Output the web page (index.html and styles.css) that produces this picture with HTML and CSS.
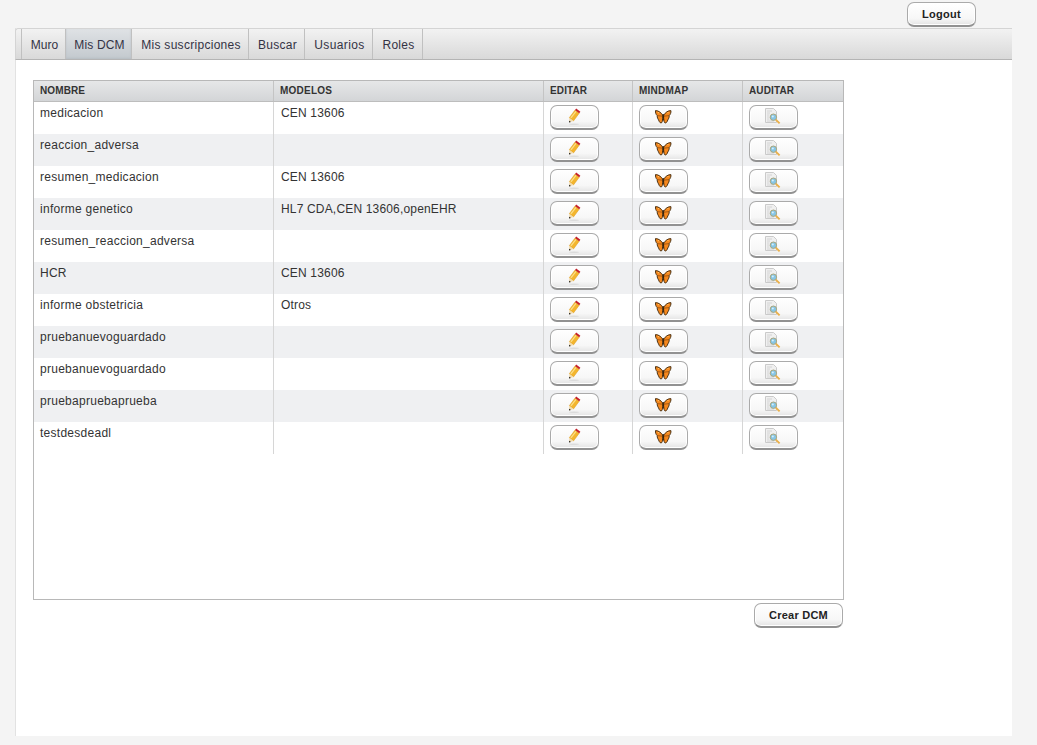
FILE: index.html
```html
<!DOCTYPE html>
<html lang="es">
<head>
<meta charset="utf-8">
<title>Mis DCM</title>
<link rel="stylesheet" href="styles.css">
</head>
<body>
<svg class="defs" width="0" height="0" aria-hidden="true">
  <symbol id="i-pencil" viewBox="0 0 18 18">
    <ellipse cx="8" cy="16.2" rx="5" ry=".8" fill="#dcdcdc"/>
    <g transform="translate(0 .5)">
      <path d="M3.3 9.2 9 1.6 13.2 4.8 7.5 12.4Z" fill="#f3b52e" stroke="#dc9a1c" stroke-width=".5"/>
      <path d="M4.9 9.4 10 2.8" stroke="#fbe08a" stroke-width="1.2"/>
      <path d="M9 1.6 10.2 0 14.4 3.2 13.2 4.8Z" fill="#c4202a"/>
      <path d="M3.3 9.2 7.5 12.4 3 14Z" fill="#f3dcae"/>
      <path d="M3 14 3.1 12.2 5 13.4Z" fill="#222"/>
    </g>
  </symbol>
  <symbol id="i-fly" viewBox="0 0 18 18">
    <path d="M7.6 7C6 4.5 3.5 2.6.5 2.6.2 4.5 1 6.6 2.2 7.6 2 9.5 3 11 3.6 12 4.4 14.5 5.8 15.6 6.8 14.6 7.6 13.5 7.6 11 7.8 9Z" fill="#f5871c" stroke="#3a2408" stroke-width=".9"/>
    <path d="M8.8 7C10.4 4.5 12.9 2.6 15.9 2.6 16.2 4.5 15.4 6.6 14.2 7.6 14.4 9.5 13.4 11 12.8 12 12 14.5 10.6 15.6 9.6 14.6 8.8 13.5 8.8 11 8.6 9Z" fill="#f5871c" stroke="#3a2408" stroke-width=".9"/>
    <path d="M2.4 7.6 7.4 8.2M14 7.6 9 8.2" stroke="#8a4a10" stroke-width=".7"/>
    <path d="M8.2 6V12.5" stroke="#2a1a06" stroke-width="1.1"/>
    <circle cx="3.4" cy="4.6" r=".7" fill="#ffc670"/>
    <circle cx="13" cy="4.6" r=".7" fill="#ffc670"/>
  </symbol>
  <symbol id="i-audit" viewBox="0 0 18 18">
    <path d="M.5 .5H8.5L11.5 3.5V14.5H.5Z" fill="#f0f0f0" stroke="#cacaca"/>
    <path d="M2 3H7M2 5H5M2 7H4.5M2 9H4.5M2 11H4.5M2 13H9" stroke="#cbcbcb" stroke-width=".8"/>
    <circle cx="8.4" cy="9.2" r="3.2" fill="#86c6e6" stroke="#aaa67c" stroke-width="1"/>
    <circle cx="7.8" cy="8.6" r="1" fill="#d8f0fb"/>
    <path d="M10.8 11.6 14.6 15.4" stroke="#eab04a" stroke-width="1.9"/>
  </symbol>
</svg>

<div class="topbar"><button class="btn btn-text">Logout</button></div>

<main class="panel">
  <nav class="tabs">
    <a class="tab tab-muro">Muro</a>
    <a class="tab tab-active tab-dcm">Mis DCM</a>
    <a class="tab tab-sus">Mis suscripciones</a>
    <a class="tab tab-buscar">Buscar</a>
    <a class="tab tab-usuarios">Usuarios</a>
    <a class="tab tab-roles">Roles</a>
  </nav>
  <section class="content">
    <div class="grid">
      <div class="row head">
        <div class="cell c-name">NOMBRE</div><div class="cell c-model">MODELOS</div><div class="cell c-edit">EDITAR</div><div class="cell c-mind">MINDMAP</div><div class="cell c-audit">AUDITAR</div>
      </div>
      <div class="row"><div class="cell c-name">medicacion</div><div class="cell c-model">CEN 13606</div><div class="cell c-edit"><button class="btn btn-icon"><svg class="ico"><use href="#i-pencil"/></svg></button></div><div class="cell c-mind"><button class="btn btn-icon"><svg class="ico"><use href="#i-fly"/></svg></button></div><div class="cell c-audit"><button class="btn btn-icon"><svg class="ico"><use href="#i-audit"/></svg></button></div></div>
      <div class="row alt"><div class="cell c-name">reaccion_adversa</div><div class="cell c-model"></div><div class="cell c-edit"><button class="btn btn-icon"><svg class="ico"><use href="#i-pencil"/></svg></button></div><div class="cell c-mind"><button class="btn btn-icon"><svg class="ico"><use href="#i-fly"/></svg></button></div><div class="cell c-audit"><button class="btn btn-icon"><svg class="ico"><use href="#i-audit"/></svg></button></div></div>
      <div class="row"><div class="cell c-name">resumen_medicacion</div><div class="cell c-model">CEN 13606</div><div class="cell c-edit"><button class="btn btn-icon"><svg class="ico"><use href="#i-pencil"/></svg></button></div><div class="cell c-mind"><button class="btn btn-icon"><svg class="ico"><use href="#i-fly"/></svg></button></div><div class="cell c-audit"><button class="btn btn-icon"><svg class="ico"><use href="#i-audit"/></svg></button></div></div>
      <div class="row alt"><div class="cell c-name">informe genetico</div><div class="cell c-model">HL7 CDA,CEN 13606,openEHR</div><div class="cell c-edit"><button class="btn btn-icon"><svg class="ico"><use href="#i-pencil"/></svg></button></div><div class="cell c-mind"><button class="btn btn-icon"><svg class="ico"><use href="#i-fly"/></svg></button></div><div class="cell c-audit"><button class="btn btn-icon"><svg class="ico"><use href="#i-audit"/></svg></button></div></div>
      <div class="row"><div class="cell c-name">resumen_reaccion_adversa</div><div class="cell c-model"></div><div class="cell c-edit"><button class="btn btn-icon"><svg class="ico"><use href="#i-pencil"/></svg></button></div><div class="cell c-mind"><button class="btn btn-icon"><svg class="ico"><use href="#i-fly"/></svg></button></div><div class="cell c-audit"><button class="btn btn-icon"><svg class="ico"><use href="#i-audit"/></svg></button></div></div>
      <div class="row alt"><div class="cell c-name">HCR</div><div class="cell c-model">CEN 13606</div><div class="cell c-edit"><button class="btn btn-icon"><svg class="ico"><use href="#i-pencil"/></svg></button></div><div class="cell c-mind"><button class="btn btn-icon"><svg class="ico"><use href="#i-fly"/></svg></button></div><div class="cell c-audit"><button class="btn btn-icon"><svg class="ico"><use href="#i-audit"/></svg></button></div></div>
      <div class="row"><div class="cell c-name">informe obstetricia</div><div class="cell c-model">Otros</div><div class="cell c-edit"><button class="btn btn-icon"><svg class="ico"><use href="#i-pencil"/></svg></button></div><div class="cell c-mind"><button class="btn btn-icon"><svg class="ico"><use href="#i-fly"/></svg></button></div><div class="cell c-audit"><button class="btn btn-icon"><svg class="ico"><use href="#i-audit"/></svg></button></div></div>
      <div class="row alt"><div class="cell c-name">pruebanuevoguardado</div><div class="cell c-model"></div><div class="cell c-edit"><button class="btn btn-icon"><svg class="ico"><use href="#i-pencil"/></svg></button></div><div class="cell c-mind"><button class="btn btn-icon"><svg class="ico"><use href="#i-fly"/></svg></button></div><div class="cell c-audit"><button class="btn btn-icon"><svg class="ico"><use href="#i-audit"/></svg></button></div></div>
      <div class="row"><div class="cell c-name">pruebanuevoguardado</div><div class="cell c-model"></div><div class="cell c-edit"><button class="btn btn-icon"><svg class="ico"><use href="#i-pencil"/></svg></button></div><div class="cell c-mind"><button class="btn btn-icon"><svg class="ico"><use href="#i-fly"/></svg></button></div><div class="cell c-audit"><button class="btn btn-icon"><svg class="ico"><use href="#i-audit"/></svg></button></div></div>
      <div class="row alt"><div class="cell c-name">pruebapruebaprueba</div><div class="cell c-model"></div><div class="cell c-edit"><button class="btn btn-icon"><svg class="ico"><use href="#i-pencil"/></svg></button></div><div class="cell c-mind"><button class="btn btn-icon"><svg class="ico"><use href="#i-fly"/></svg></button></div><div class="cell c-audit"><button class="btn btn-icon"><svg class="ico"><use href="#i-audit"/></svg></button></div></div>
      <div class="row"><div class="cell c-name">testdesdeadl</div><div class="cell c-model"></div><div class="cell c-edit"><button class="btn btn-icon"><svg class="ico"><use href="#i-pencil"/></svg></button></div><div class="cell c-mind"><button class="btn btn-icon"><svg class="ico"><use href="#i-fly"/></svg></button></div><div class="cell c-audit"><button class="btn btn-icon"><svg class="ico"><use href="#i-audit"/></svg></button></div></div>
    </div>
    <div class="actions"><button class="btn btn-text btn-crear">Crear DCM</button></div>
  </section>
</main>
</body>
</html>
```

FILE: styles.css
```css
* { box-sizing: border-box; }
html, body { margin: 0; height: 745px; overflow: hidden; }
body {
  background: #f4f4f4;
  font-family: "Liberation Sans", Arial, sans-serif;
  font-size: 12px;
  color: #333;
}
.defs { position: absolute; }

.topbar {
  height: 28px;
  padding: 2px 61px 0 0;
  display: flex;
  justify-content: flex-end;
  align-items: flex-start;
}

.btn {
  font-family: inherit;
  display: flex;
  align-items: center;
  justify-content: center;
  padding: 0;
  border: 1px solid #aaaaaa;
  border-bottom: 2px solid #929292;
  border-radius: 7px;
  background: linear-gradient(#ffffff 0%, #f7f7f7 70%, #e4e4e4 100%);
  box-shadow: inset 0 0 0 1px #fff;
}
.btn-text {
  width: 69px;
  height: 25px;
  font-size: 11px;
  font-weight: bold;
  letter-spacing: .25px;
  color: #222;
}
.btn-icon { width: 49px; height: 25px; margin-top: -1px; }
.ico { width: 18px; height: 18px; display: block; }

.panel {
  margin-left: 15px;
  width: 997px;
  height: 708px;
  background: #fff;
  border-left: 1px solid #e2e2e2;
}

.tabs {
  height: 32px;
  display: flex;
  padding-left: 5px;
  margin-left: -1px;
  background: linear-gradient(#f2f2f2, #d9d9d9);
  border-top: 1px solid #d4d4d4;
  border-left: 1px solid #d4d4d4;
  border-bottom: 1px solid #b4b4b4;
  border-top-left-radius: 3px;
}
.tab {
  display: flex;
  align-items: center;
  justify-content: center;
  height: 30px;
  padding: 2px 0 0 2px;
  border-left: 1px solid #c0c0c0;
  font-size: 12px;
  letter-spacing: .29px;
  color: #333344;
}
.tab:last-child { border-right: 1px solid #c0c0c0; }
.tab-muro { width: 44px; letter-spacing: .1px; }
.tab-dcm { width: 66px; letter-spacing: .15px; }
.tab-sus { width: 117px; }
.tab-buscar { width: 56px; }
.tab-usuarios { width: 68px; letter-spacing: .4px; }
.tab-roles { width: 51px; }
.tab-active {
  background: linear-gradient(#dfe2e5, #c3c9ce);
  box-shadow: inset 0 -1px 2px #b8bec4;
}

.content { padding: 20px 0 0 17px; width: 828px; }

.grid {
  width: 811px;
  height: 520px;
  border: 1px solid #b8b8b8;
  background: #fff;
}
.row { display: flex; height: 32px; background: #fff; }
.row.alt { background: #eff0f2; }
.row.head {
  height: 21px;
  background: linear-gradient(#e6e7e8, #d3d5d7);
  border-bottom: 1px solid #bdbdbd;
  font-size: 10px;
  font-weight: bold;
  color: #333;
}
.cell {
  padding: 4px 6px 0;
  border-right: 1px solid #d6d6d6;
  line-height: 14px;
  letter-spacing: .27px;
}
.head .cell { padding-top: 3px; letter-spacing: .12px; border-right-color: #c4c4c4; }
.c-name { width: 240px; }
.c-model { width: 270px; padding-left: 7px; letter-spacing: .17px; }
.head .c-model { padding-left: 6px; letter-spacing: .22px; }
.c-edit { width: 89px; }
.c-mind { width: 110px; }
.c-audit { width: 100px; border-right: 0; }
.head .c-mind { letter-spacing: .22px; }

.actions { display: flex; justify-content: flex-end; padding: 3px 1px 0 0; }
.btn-crear { width: 89px; }
```
